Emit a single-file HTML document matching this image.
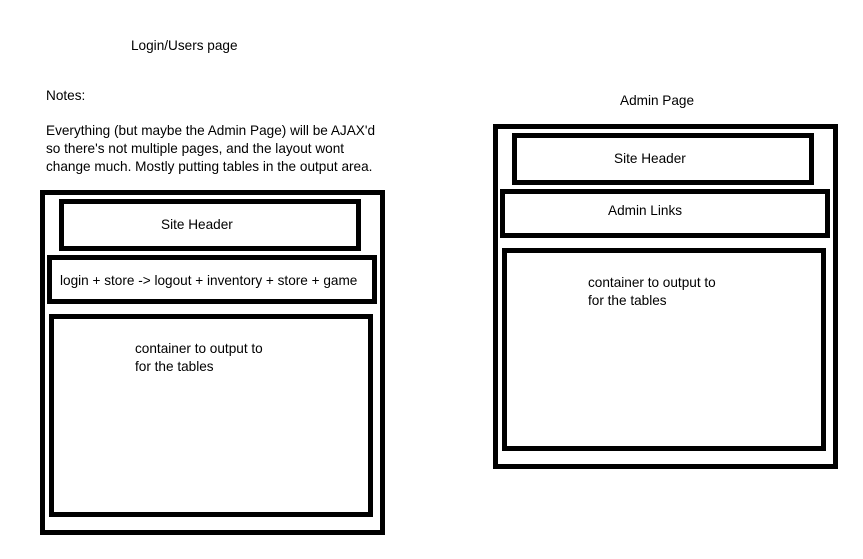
<!DOCTYPE html>
<html><head><meta charset="utf-8"><style>
body{margin:0;width:863px;height:559px;background:#fff;position:relative;overflow:hidden;font-family:"Liberation Sans",sans-serif;font-size:13.6px;color:#000}
.b{position:absolute;border:5px solid #000;box-sizing:border-box}
.t{position:absolute;white-space:nowrap;line-height:18px}
</style></head><body>
<div class="t" style="left:131px;top:37px">Login/Users page</div>
<div class="t" style="left:46px;top:87px">Notes:</div>
<div class="t" style="left:46px;top:122px">Everything (but maybe the Admin Page) will be AJAX'd</div>
<div class="t" style="left:46px;top:140px">so there's not multiple pages, and the layout wont</div>
<div class="t" style="left:46px;top:158px">change much. Mostly putting tables in the output area.</div>
<div class="t" style="left:620px;top:92px">Admin Page</div>

<div class="b" style="left:40px;top:190px;width:345px;height:345px"></div>
<div class="b" style="left:59px;top:199px;width:302px;height:52px"></div>
<div class="b" style="left:47px;top:255px;width:330px;height:49px"></div>
<div class="b" style="left:49px;top:314px;width:324px;height:203px"></div>
<div class="t" style="left:161px;top:216px">Site Header</div>
<div class="t" style="left:60px;top:272px">login + store -&gt; logout + inventory + store + game</div>
<div class="t" style="left:135px;top:340px">container to output to</div>
<div class="t" style="left:135px;top:358px">for the tables</div>

<div class="b" style="left:493px;top:124px;width:345px;height:345px"></div>
<div class="b" style="left:512px;top:133px;width:302px;height:52px"></div>
<div class="b" style="left:500px;top:189px;width:330px;height:49px"></div>
<div class="b" style="left:502px;top:248px;width:324px;height:203px"></div>
<div class="t" style="left:614px;top:150px">Site Header</div>
<div class="t" style="left:608px;top:202px">Admin Links</div>
<div class="t" style="left:588px;top:274px">container to output to</div>
<div class="t" style="left:588px;top:292px">for the tables</div>
</body></html>
